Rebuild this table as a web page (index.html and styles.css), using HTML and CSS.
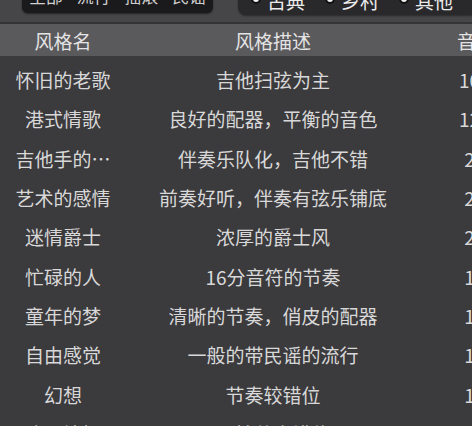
FILE: index.html
```html
<!DOCTYPE html>
<html lang="zh-CN">
<head>
    <meta charset="UTF-8">
    <meta name="viewport" content="width=device-width, initial-scale=1.0">
    <title>风格列表</title>
    <link rel="stylesheet" href="styles.css">
</head>
<body>
    <div class="topbar">
        <div class="segmentos">
            <span>全部</span>
            <span>流行</span>
            <span>摇滚</span>
            <span>民谣</span>
        </div>
        <div class="filtros">
            <label class="opcao"><i class="ponto"></i>古典</label>
            <label class="opcao"><i class="ponto"></i>乡村</label>
            <label class="opcao"><i class="ponto"></i>其他</label>
        </div>
    </div>

    <div class="cabecalho">
        <div class="col-nome">风格名</div>
        <div class="col-desc">风格描述</div>
        <div class="col-num">音色</div>
    </div>

    <div class="lista">
        <div class="linha"><div class="col-nome">怀旧的老歌</div><div class="col-desc">吉他扫弦为主</div><div class="col-num">10</div></div>
        <div class="linha"><div class="col-nome">港式情歌</div><div class="col-desc">良好的配器，平衡的音色</div><div class="col-num">12</div></div>
        <div class="linha"><div class="col-nome">吉他手的…</div><div class="col-desc">伴奏乐队化，吉他不错</div><div class="col-num">2</div></div>
        <div class="linha"><div class="col-nome">艺术的感情</div><div class="col-desc">前奏好听，伴奏有弦乐铺底</div><div class="col-num">2</div></div>
        <div class="linha"><div class="col-nome">迷情爵士</div><div class="col-desc">浓厚的爵士风</div><div class="col-num">2</div></div>
        <div class="linha"><div class="col-nome">忙碌的人</div><div class="col-desc">16分音符的节奏</div><div class="col-num">1</div></div>
        <div class="linha"><div class="col-nome">童年的梦</div><div class="col-desc">清晰的节奏，俏皮的配器</div><div class="col-num">1</div></div>
        <div class="linha"><div class="col-nome">自由感觉</div><div class="col-desc">一般的带民谣的流行</div><div class="col-num">1</div></div>
        <div class="linha"><div class="col-nome">幻想</div><div class="col-desc">节奏较错位</div><div class="col-num">1</div></div>
        <div class="linha"><div class="col-nome">浪漫情怀</div><div class="col-desc">弱拍节奏错位</div><div class="col-num">1</div></div>
    </div>
</body>
</html>
```

FILE: styles.css
```css
body {
    margin: 0;
    width: 472px;
    height: 426px;
    overflow: hidden;
    background-color: #3b3a3d;
    font-family: "Noto Sans CJK SC", "Noto Sans", sans-serif;
    color: #d8d8d8;
}
.topbar {
    display: flex;
    align-items: flex-start;
    height: 22px;
    background-color: #464548;
    border-bottom: 2px solid #343336;
    overflow: hidden;
}
.segmentos {
    display: flex;
    align-items: flex-end;
    justify-content: space-around;
    flex-shrink: 0;
    margin-left: 22px;
    width: 191px;
    height: 13px;
    padding-bottom: 9px;
    box-sizing: border-box;
    background-color: #1a191c;
    border-radius: 0 0 6px 6px;
    box-shadow: 0 1px 2px rgba(0, 0, 0, 0.5);
    overflow: hidden;
}
.segmentos span {
    font-size: 17px;
    line-height: 17px;
    color: #cfcfcf;
    white-space: nowrap;
}
.filtros {
    display: flex;
    align-items: flex-end;
    flex: 1;
    margin-left: 25px;
    height: 15px;
    padding-bottom: 5px;
    padding-left: 13px;
    box-sizing: border-box;
    background-color: #29282b;
    border-radius: 0 0 0 8px;
    box-shadow: 0 1px 2px rgba(0, 0, 0, 0.4);
    overflow: hidden;
}
.opcao {
    display: flex;
    align-items: flex-end;
    flex-shrink: 0;
    gap: 6px;
    margin-right: 20px;
    font-size: 19px;
    line-height: 19px;
    color: #ececec;
    white-space: nowrap;
}
.ponto {
    display: block;
    width: 6px;
    height: 6px;
    margin-bottom: 6px;
    border-radius: 50%;
    background-color: #f2f2f2;
    border: 2px solid #111;
}
.cabecalho {
    display: grid;
    grid-template-columns: 126px 294px 99px;
    align-items: center;
    height: 32px;
    background-color: #5a595c;
    font-size: 19px;
    color: #e4e4e4;
}
.lista {
    padding-top: 4px;
}
.linha {
    display: grid;
    grid-template-columns: 126px 294px 99px;
    align-items: center;
    height: 39.3px;
    font-size: 19px;
}
.col-nome, .col-desc, .col-num {
    text-align: center;
    white-space: nowrap;
}
.cabecalho .col-num {
    text-align: left;
    padding-left: 37px;
}
```
